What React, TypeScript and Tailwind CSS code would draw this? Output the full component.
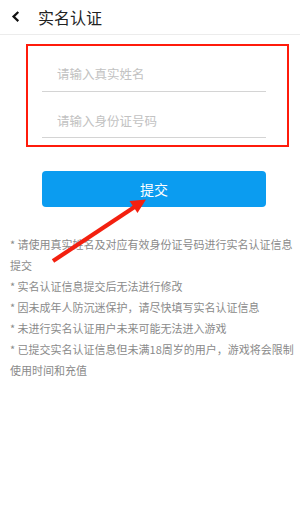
import React from "react";

const notes = [
  "请使用真实姓名及对应有效身份证号码进行实名认证信息提交",
  "实名认证信息提交后无法进行修改",
  "因未成年人防沉迷保护，请尽快填写实名认证信息",
  "未进行实名认证用户未来可能无法进入游戏",
  "已提交实名认证信息但未满18周岁的用户，游戏将会限制使用时间和充值",
];

const font = { fontFamily: '"Noto Sans CJK SC", "Noto Sans", sans-serif' };

function Field({ placeholder, pt }: { placeholder: string; pt: string }) {
  return (
    <div className={`flex h-[46px] items-start border-b border-[#d4d4d4] ${pt}`}>
      <input
        placeholder={placeholder}
        className="w-full bg-transparent pl-[15px] text-[12.5px] leading-[18px] text-[#333] outline-none placeholder:text-[#c2c2c2]"
        style={font}
      />
    </div>
  );
}

export default function App() {
  return (
    <div className="relative h-[530px] w-[300px] overflow-hidden bg-white" style={font}>
      <header className="flex h-[35px] items-center border-b border-[#ececec]">
        <svg width="38" height="30" viewBox="0 0 38 30" className="shrink-0">
          <polyline
            points="17.5,10.8 13.5,14.6 17.5,18.4"
            fill="none"
            stroke="#111"
            strokeWidth="2.2"
            strokeLinecap="square"
          />
        </svg>
        <h1 className="text-[16px] leading-none text-[#222]">实名认证</h1>
      </header>

      <div className="ml-[26px] mt-[9px] w-[263px] border-2 border-[#ff1b0b] pb-[7px] pl-[14px] pr-[21px]">
        <Field placeholder="请输入真实姓名" pt="pt-[19px]" />
        <Field placeholder="请输入身份证号码" pt="pt-[20px]" />
      </div>

      <button
        type="button"
        className="ml-[42px] mt-[24px] flex h-[36px] w-[224px] items-center justify-center rounded-[4px] bg-[#0b9cf0] text-[14px] text-white"
      >
        提交
      </button>

      <ul className="mt-[27px] pl-[10px] pr-[6px] text-[11px] leading-[21px] text-[#8a8a8a]">
        {notes.map((n) => (
          <li key={n}>* {n}</li>
        ))}
      </ul>

      <svg
        className="pointer-events-none absolute left-0 top-0"
        width="300"
        height="530"
        viewBox="0 0 300 530"
      >
        <line x1="53" y1="261" x2="136" y2="206" stroke="#f3200f" strokeWidth="4.2" />
        <polygon points="146,199.5 129.5,201 137.5,213" fill="#f3200f" />
      </svg>
    </div>
  );
}
